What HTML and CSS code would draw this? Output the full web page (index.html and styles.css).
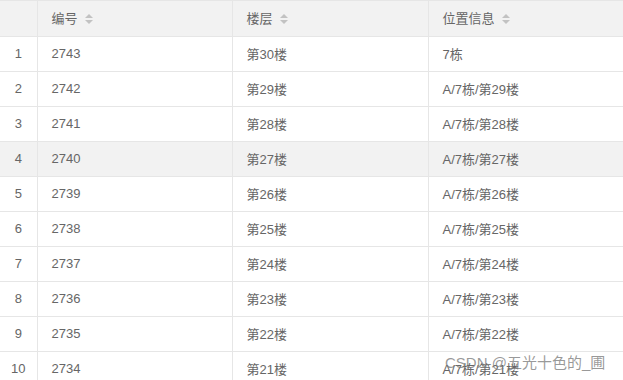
FILE: index.html
```html
<!DOCTYPE html>
<html lang="zh-CN">
<head>
  <meta charset="UTF-8">
  <title>楼层列表</title>
  <link rel="stylesheet" href="styles.css">
</head>
<body>
  <div class="table-wrap">
    <table class="data-table">
      <colgroup>
        <col class="col-index">
        <col class="col-id">
        <col class="col-floor">
        <col class="col-pos">
      </colgroup>
      <thead>
        <tr>
          <th></th>
          <th>编号 <span class="sort"><i class="up"></i><i class="down"></i></span></th>
          <th>楼层 <span class="sort"><i class="up"></i><i class="down"></i></span></th>
          <th>位置信息 <span class="sort"><i class="up"></i><i class="down"></i></span></th>
        </tr>
      </thead>
      <tbody>
        <tr><td class="idx">1</td><td>2743</td><td>第30楼</td><td>7栋</td></tr>
        <tr><td class="idx">2</td><td>2742</td><td>第29楼</td><td>A/7栋/第29楼</td></tr>
        <tr><td class="idx">3</td><td>2741</td><td>第28楼</td><td>A/7栋/第28楼</td></tr>
        <tr class="hover"><td class="idx">4</td><td>2740</td><td>第27楼</td><td>A/7栋/第27楼</td></tr>
        <tr><td class="idx">5</td><td>2739</td><td>第26楼</td><td>A/7栋/第26楼</td></tr>
        <tr><td class="idx">6</td><td>2738</td><td>第25楼</td><td>A/7栋/第25楼</td></tr>
        <tr><td class="idx">7</td><td>2737</td><td>第24楼</td><td>A/7栋/第24楼</td></tr>
        <tr><td class="idx">8</td><td>2736</td><td>第23楼</td><td>A/7栋/第23楼</td></tr>
        <tr><td class="idx">9</td><td>2735</td><td>第22楼</td><td>A/7栋/第22楼</td></tr>
        <tr><td class="idx">10</td><td>2734</td><td>第21楼</td><td>A/7栋/第21楼</td></tr>
      </tbody>
    </table>
    <div class="watermark">CSDN @五光十色的_圃</div>
  </div>
</body>
</html>
```

FILE: styles.css
```css
body {
  margin: 0;
  padding: 0;
  background: #fff;
  font-family: "Liberation Sans", "Noto Sans CJK SC", sans-serif;
  font-size: 13px;
  color: #666;
}
.table-wrap {
  position: relative;
  width: 623px;
  height: 380px;
  overflow: hidden;
}
.data-table {
  border-collapse: collapse;
  table-layout: fixed;
  width: 623px;
  border-top: 1px solid #e6e6e6;
}
.col-index { width: 37px; }
.col-id { width: 195px; }
.col-floor { width: 196px; }
.col-pos { width: 195px; }
.data-table th,
.data-table td {
  height: 33px;
  padding: 0 0 1px 14px;
  border-bottom: 1px solid #e6e6e6;
  border-left: 1px solid #e6e6e6;
  text-align: left;
  font-weight: normal;
  white-space: nowrap;
}
.data-table th:first-child,
.data-table td:first-child {
  border-left: none;
}
.data-table th {
  height: 33px;
  padding-bottom: 2px;
  background: #f2f2f2;
  color: #666;
}
.data-table td.idx {
  padding: 0 0 1px 0;
  text-align: center;
}
.data-table tr.hover td {
  background: #f2f2f2;
}
.sort {
  display: inline-flex;
  flex-direction: column;
  gap: 2px;
  vertical-align: middle;
  margin-left: 4px;
  margin-top: -2px;
}
.sort i {
  display: block;
  width: 0;
  height: 0;
  border-left: 4px solid transparent;
  border-right: 4px solid transparent;
}
.sort .up {
  border-bottom: 4px solid #c2c2c2;
}
.sort .down {
  border-top: 4px solid #c2c2c2;
}
.watermark {
  position: absolute;
  left: 445px;
  top: 351px;
  font-size: 15px;
  color: rgba(120, 120, 120, 0.75);
  pointer-events: none;
}
```
